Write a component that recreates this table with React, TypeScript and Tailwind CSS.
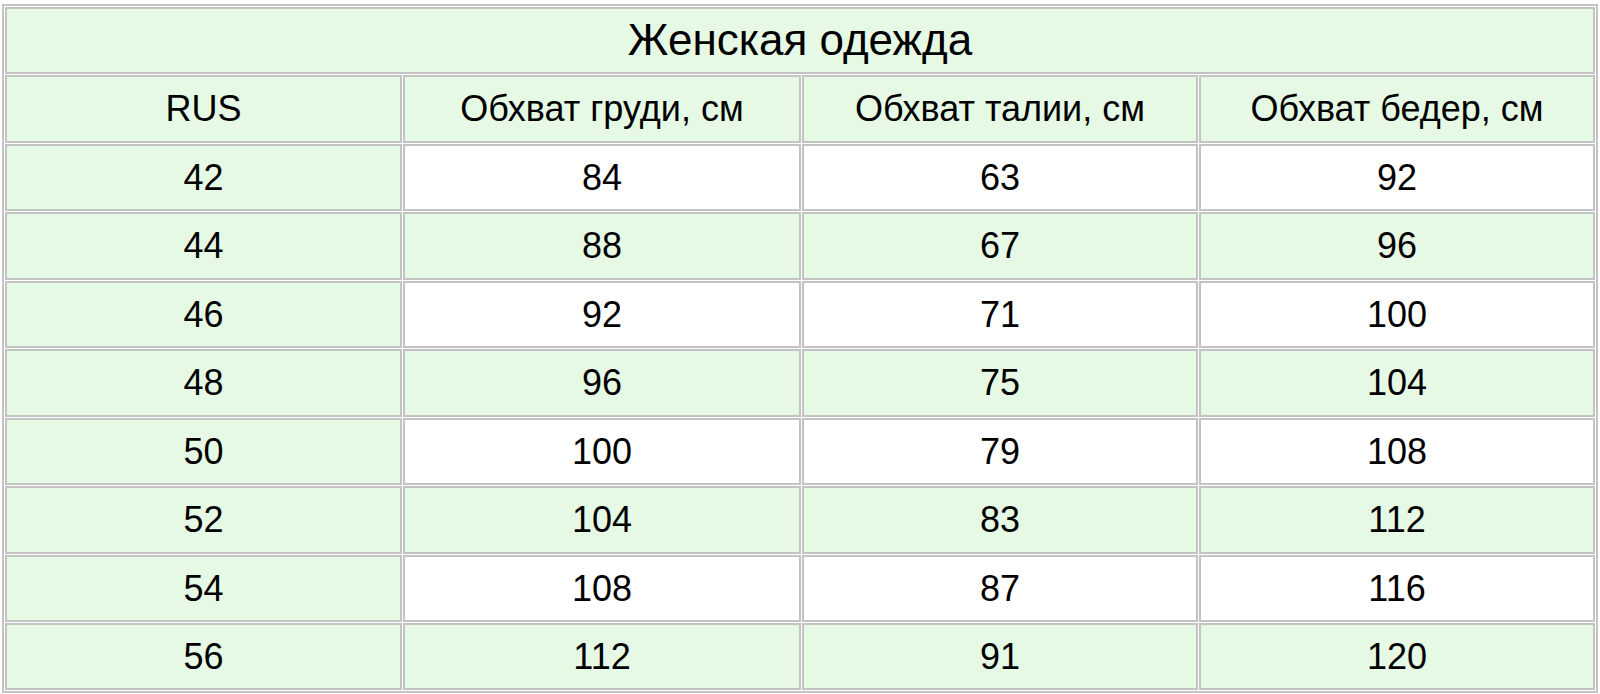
import React from 'react';

const rows = [
  ['42', '84', '63', '92'],
  ['44', '88', '67', '96'],
  ['46', '92', '71', '100'],
  ['48', '96', '75', '104'],
  ['50', '100', '79', '108'],
  ['52', '104', '83', '112'],
  ['54', '108', '87', '116'],
  ['56', '112', '91', '120'],
];

const headers = ['RUS', 'Обхват груди, см', 'Обхват талии, см', 'Обхват бедер, см'];

// row heights alternate 67/68 so the table fills 688px like the original
const rowH = ['h-[67px]', 'h-[68px]', 'h-[67px]', 'h-[68px]', 'h-[67px]', 'h-[68px]', 'h-[67px]', 'h-[67px]'];

const cell = 'border-2 border-[#c3c3c3] p-0 text-center align-middle text-[36px] leading-none font-normal text-black';

export default function App() {
  return (
    <div className="pt-[4px] pl-[2px] bg-white" style={{ fontFamily: '"Liberation Sans", Arial, sans-serif' }}>
      <table className="w-[1596px] table-fixed border-separate border-spacing-[1px] border-2 border-[#c3c3c3]">
        <colgroup>
          <col className="w-[397px]" />
          <col className="w-[398px]" />
          <col className="w-[396px]" />
          <col className="w-[396px]" />
        </colgroup>
        <tbody>
          {/* title */}
          <tr>
            <td colSpan={4} className="border-2 border-[#c3c3c3] h-[67px] p-0 pb-[2px] text-center align-middle text-[44px] leading-none text-black bg-[#e6f9e4]">
              Женская одежда
            </td>
          </tr>
          <tr>
            {headers.map((h) => (
              <td key={h} className={`${cell} h-[68px] bg-[#e6f9e4]`}>{h}</td>
            ))}
          </tr>
          {rows.map((r, i) => (
            <tr key={r[0]}>
              {r.map((v, j) => (
                <td
                  key={j}
                  className={`${cell} ${rowH[i]} ${j === 0 || i % 2 === 1 ? 'bg-[#e6f9e4]' : 'bg-white'}`}
                >
                  {v}
                </td>
              ))}
            </tr>
          ))}
        </tbody>
      </table>
    </div>
  );
}
